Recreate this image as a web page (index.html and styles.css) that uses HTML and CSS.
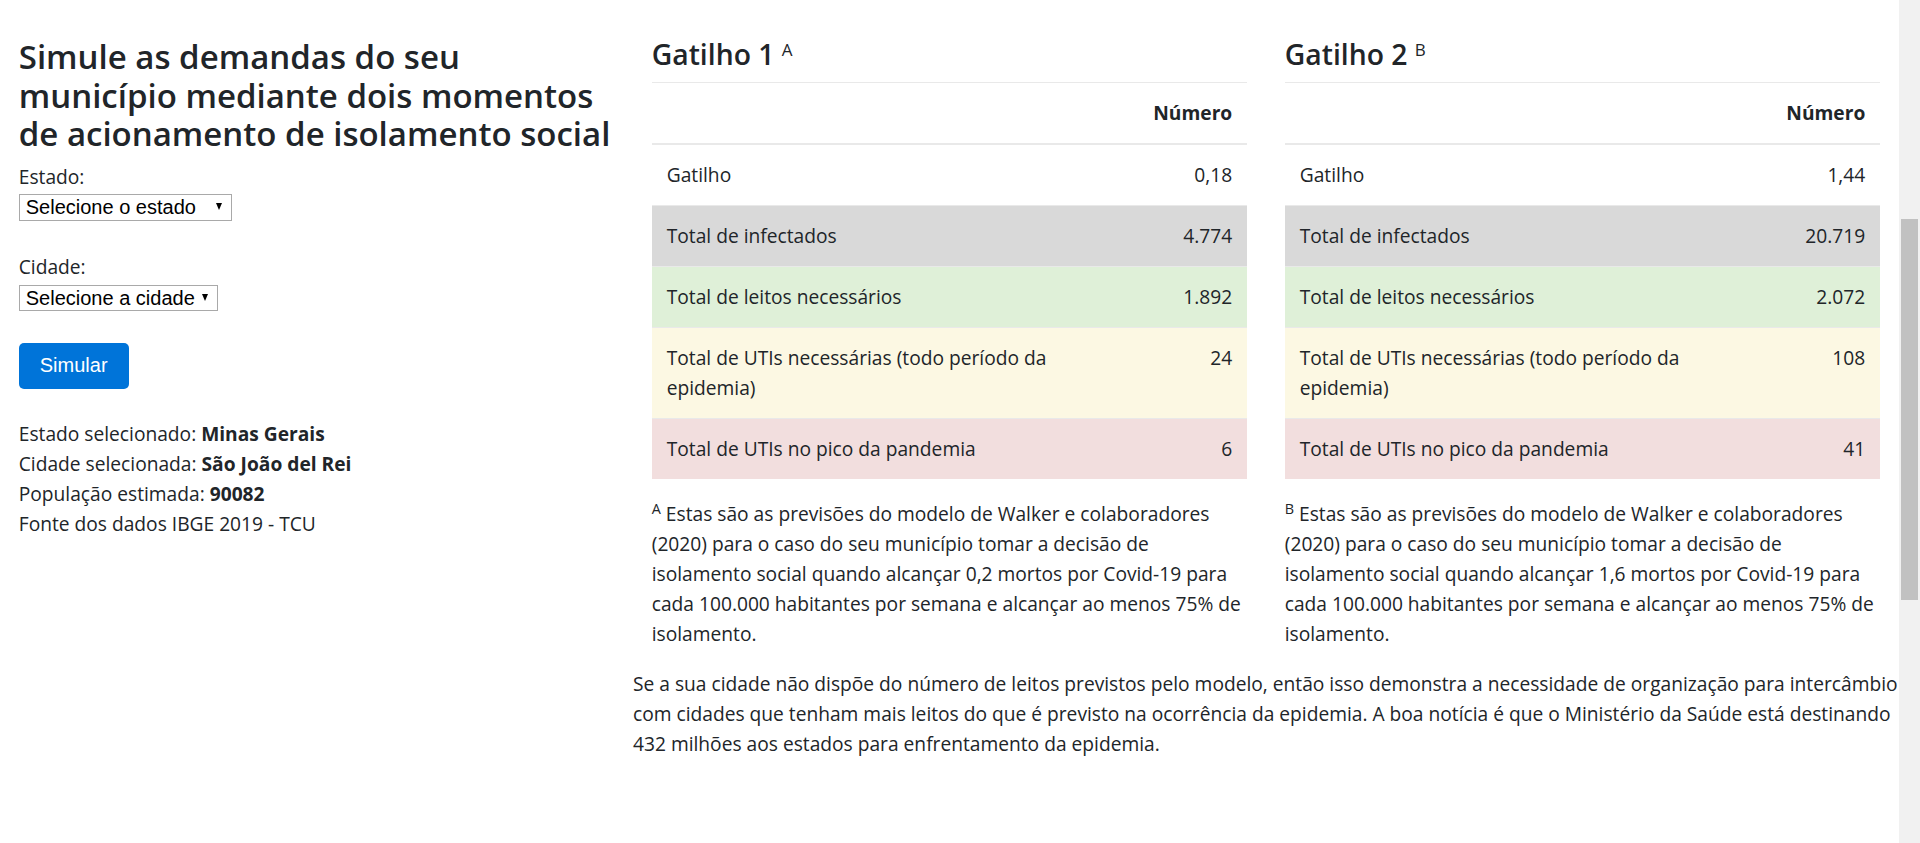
FILE: index.html
```html
<!DOCTYPE html>
<html lang="pt-BR">

<head>
    <meta charset="UTF-8">
    <meta name="viewport" content="width=device-width, initial-scale=1.0">
    <title>Simulador de demandas - Covid-19</title>
    <link rel="stylesheet" href="styles.css">
</head>

<body>
    <div class="page">
        <main class="layout">
            <section class="sidebar">
                <h2 class="page-title">Simule as demandas do seu município mediante dois momentos de acionamento de isolamento social</h2>

                <form class="sim-form" onsubmit="return false">
                    <label class="field-label" for="estado">Estado:</label>
                    <span class="select-wrap">
                        <select class="select select-estado" id="estado">
                            <option>Selecione o estado</option>
                        </select>
                    </span>

                    <label class="field-label field-gap" for="cidade">Cidade:</label>
                    <span class="select-wrap">
                        <select class="select select-cidade" id="cidade">
                            <option>Selecione a cidade</option>
                        </select>
                    </span>

                    <button class="btn-simular" type="submit">Simular</button>
                </form>

                <div class="info">
                    <p>Estado selecionado: <b>Minas Gerais</b></p>
                    <p>Cidade selecionada: <b>São João del Rei</b></p>
                    <p>População estimada: <b>90082</b></p>
                    <p>Fonte dos dados IBGE 2019 - TCU</p>
                </div>
            </section>

            <section class="results">
                <div class="results-row">
                    <div class="result-col">
                        <h4 class="trigger-title">Gatilho 1 <sup class="title-mark">A</sup></h4>
                        <table class="result-table">
                            <thead>
                                <tr>
                                    <th></th>
                                    <th class="num">Número</th>
                                </tr>
                            </thead>
                            <tbody>
                                <tr>
                                    <td>Gatilho</td>
                                    <td class="num">0,18</td>
                                </tr>
                                <tr class="row-gray">
                                    <td>Total de infectados</td>
                                    <td class="num">4.774</td>
                                </tr>
                                <tr class="row-green">
                                    <td>Total de leitos necessários</td>
                                    <td class="num">1.892</td>
                                </tr>
                                <tr class="row-yellow">
                                    <td>Total de UTIs necessárias (todo período da epidemia)</td>
                                    <td class="num">24</td>
                                </tr>
                                <tr class="row-red">
                                    <td>Total de UTIs no pico da pandemia</td>
                                    <td class="num">6</td>
                                </tr>
                            </tbody>
                        </table>
                        <p class="footnote"><sup>A</sup> Estas são as previsões do modelo de Walker e colaboradores (2020) para o caso do seu município tomar a decisão de isolamento social quando alcançar 0,2 mortos por Covid-19 para cada 100.000 habitantes por semana e alcançar ao menos 75% de isolamento.</p>
                    </div>

                    <div class="result-col">
                        <h4 class="trigger-title">Gatilho 2 <sup class="title-mark">B</sup></h4>
                        <table class="result-table">
                            <thead>
                                <tr>
                                    <th></th>
                                    <th class="num">Número</th>
                                </tr>
                            </thead>
                            <tbody>
                                <tr>
                                    <td>Gatilho</td>
                                    <td class="num">1,44</td>
                                </tr>
                                <tr class="row-gray">
                                    <td>Total de infectados</td>
                                    <td class="num">20.719</td>
                                </tr>
                                <tr class="row-green">
                                    <td>Total de leitos necessários</td>
                                    <td class="num">2.072</td>
                                </tr>
                                <tr class="row-yellow">
                                    <td>Total de UTIs necessárias (todo período da epidemia)</td>
                                    <td class="num">108</td>
                                </tr>
                                <tr class="row-red">
                                    <td>Total de UTIs no pico da pandemia</td>
                                    <td class="num">41</td>
                                </tr>
                            </tbody>
                        </table>
                        <p class="footnote"><sup>B</sup> Estas são as previsões do modelo de Walker e colaboradores (2020) para o caso do seu município tomar a decisão de isolamento social quando alcançar 1,6 mortos por Covid-19 para cada 100.000 habitantes por semana e alcançar ao menos 75% de isolamento.</p>
                    </div>
                </div>

                <p class="note">Se a sua cidade não dispõe do número de leitos previstos pelo modelo, então isso demonstra a necessidade de organização para intercâmbio com cidades que tenham mais leitos do que é previsto na ocorrência da epidemia. A boa notícia é que o Ministério da Saúde está destinando 432 milhões aos estados para enfrentamento da epidemia.</p>
            </section>
        </main>

        <!-- window scrollbar, page is scrolled a bit -->
        <div class="scrollbar">
            <div class="scrollbar-thumb"></div>
        </div>
    </div>
</body>

</html>
```

FILE: styles.css
```css
* {
    box-sizing: border-box;
}

body {
    margin: 0;
    font-family: 'Open Sans', 'Noto Sans', sans-serif;
    font-size: 19.2px;
    line-height: 30px;
    color: #212529;
    background: #fff;
}

.page {
    display: flex;
    height: 843px;
    overflow: hidden;
}

.layout {
    flex: 1;
    display: flex;
    padding-top: 36px;
}

/* Left column */
.sidebar {
    flex: 0 0 33.3333%;
    padding: 0 18.75px;
}

.page-title {
    margin: 2px 0 8px;
    font-size: 33px;
    line-height: 38.5px;
    font-weight: 600;
}

.sim-form {
    display: flex;
    flex-direction: column;
    align-items: flex-start;
}

.field-label {
    display: block;
    line-height: 30px;
}

.field-gap {
    margin-top: 31.5px;
}

.select-wrap {
    position: relative;
    display: inline-block;
    margin-top: 2.5px;
}

.select-wrap::after {
    content: '';
    position: absolute;
    right: 10px;
    top: 9px;
    border-left: 3px solid transparent;
    border-right: 3px solid transparent;
    border-top: 7px solid #000;
    pointer-events: none;
}

.select {
    -webkit-appearance: none;
    appearance: none;
    display: block;
    height: 26.5px;
    margin: 0;
    padding: 0 0 0 6px;
    border: 1px solid #a9a9a9;
    border-radius: 0;
    background: #fff;
    color: #000;
    font-family: 'Liberation Sans', Arial, sans-serif;
    font-size: 20px;
    line-height: 24px;
}

.select-estado {
    width: 213px;
}

.select-cidade {
    width: 199px;
}

.btn-simular {
    margin-top: 31.5px;
    height: 46.7px;
    padding: 0 21px;
    border: none;
    border-radius: 5px;
    background: #0074d9;
    color: #fff;
    font-family: 'Liberation Sans', Arial, sans-serif;
    font-size: 20px;
    cursor: pointer;
}

.info {
    margin-top: 30px;
}

.info p {
    margin: 0;
}

.info b {
    font-weight: 700;
}

/* Right side */
.results {
    flex: 1;
    padding: 0 18.75px;
}

.results-row {
    display: flex;
    margin: 0 -18.75px;
}

.result-col {
    flex: 1 1 0;
    padding: 0 18.75px;
}

.trigger-title {
    margin: 0 0 10px;
    font-size: 28.3px;
    line-height: 36px;
    font-weight: 600;
}

.result-table {
    width: 100%;
    margin-bottom: 20px;
    border-collapse: collapse;
}

.result-table th,
.result-table td {
    padding: 15px;
    line-height: 30px;
    vertical-align: top;
    border-top: 1px solid #e9e9e9;
    text-align: left;
}

.result-table th {
    font-weight: 700;
}

.result-table thead th {
    border-bottom: 2px solid #e9e9e9;
}

.result-table .num {
    text-align: right;
}

.row-gray td {
    background: #d9d9d9;
}

.row-green td {
    background: #dff0d8;
}

.row-yellow td {
    background: #fcf8e3;
}

.row-red td {
    background: #f2dede;
}

.footnote {
    margin: 0 0 20px;
}

sup {
    font-size: 75%;
    line-height: 0;
    vertical-align: 0.5em;
}

.trigger-title .title-mark {
    font-size: 17px;
    font-weight: 400;
    vertical-align: 9px;
}

.note {
    margin: 0 -18.75px 20px;
}

/* fake window scrollbar */
.scrollbar {
    flex: 0 0 21px;
    background: #f1f1f1;
}

.scrollbar-thumb {
    height: 381px;
    margin: 219px 2px 0;
    background: #c1c1c1;
}
```
